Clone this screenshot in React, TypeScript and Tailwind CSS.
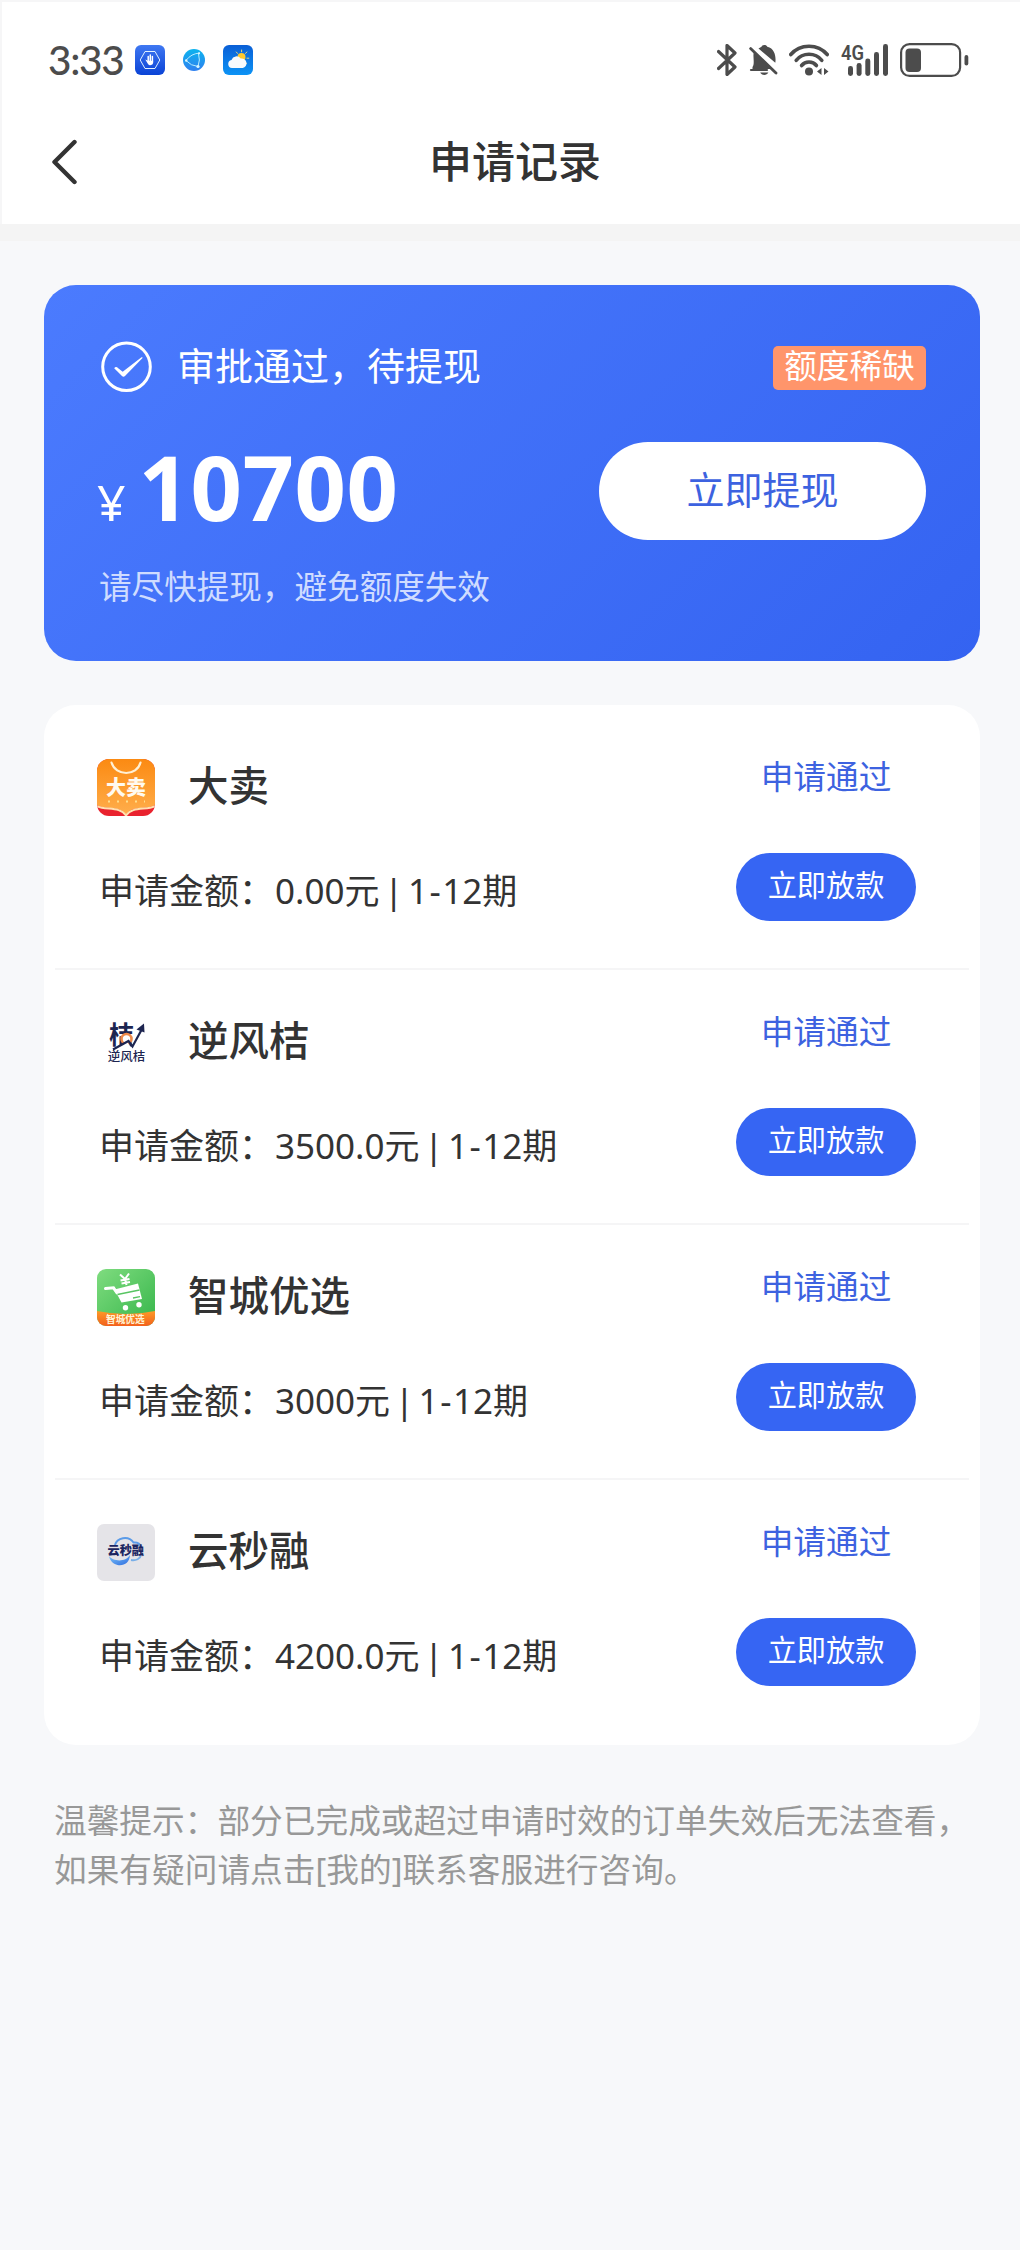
import type { ReactNode } from "react";

type RecordItem = {
  name: string;
  amount: string;
  icon: ReactNode;
};

function LockAppIcon() {
  return (
    <svg viewBox="0 0 30 30" className="h-[30px] w-[30px]">
      <defs>
        <linearGradient id="lock-bg" x1="0" y1="0" x2="0" y2="1">
          <stop offset="0" stopColor="#3f78f2" />
          <stop offset="1" stopColor="#0a43d6" />
        </linearGradient>
      </defs>
      <rect width="30" height="30" rx="6" fill="url(#lock-bg)" />
      <path d="M10 6.500h10l4.800 8.500-4.800 8.500H10L5.200 15z" fill="none" stroke="#dff0ff" strokeWidth="1" strokeLinejoin="round" />
      <path d="M13.200 16v-4.500M15.300 16v-6M17.400 16v-4.500" stroke="#fff" strokeWidth="1.500" strokeLinecap="round" />
      <path d="M10.300 14.500l2.700 1.300h5.200v1.700a2.900 2.900 0 0 1-5.200 1.600z" fill="#fff" />
    </svg>
  );
}

function GlobeAppIcon() {
  return (
    <svg viewBox="0 0 22 22" className="h-[22px] w-[22px]">
      <defs>
        <linearGradient id="globe-bg" x1="0" y1="0" x2="0" y2="1">
          <stop offset="0" stopColor="#0cb4ee" />
          <stop offset="1" stopColor="#2f80f0" />
        </linearGradient>
      </defs>
      <circle cx="11" cy="11" r="11" fill="url(#globe-bg)" />
      <path d="M3 11.500Q8 4.500 17 4M3 11.500Q8 17 15 17.500M15.500 4.500Q17.500 11 15 17.500" fill="none" stroke="#b8ecff" strokeWidth="1" />
      <circle cx="3.200" cy="11.500" r="1.200" fill="#d8f5ff" />
      <circle cx="15" cy="17.500" r="1.600" fill="#d8f5ff" />
      <circle cx="16" cy="4.300" r="1.100" fill="#d8f5ff" />
    </svg>
  );
}

function WeatherAppIcon() {
  return (
    <svg viewBox="0 0 30 30" className="h-[30px] w-[30px]">
      <defs>
        <linearGradient id="weather-bg" x1="0" y1="0" x2="0" y2="1">
          <stop offset="0" stopColor="#0a5fd6" />
          <stop offset="1" stopColor="#0c93f5" />
        </linearGradient>
      </defs>
      <rect width="30" height="30" rx="6" fill="url(#weather-bg)" />
      <path d="M18.600 5v1.800M13.300 7l1.200 1.400M23.800 7l-1.200 1.400M24 13.200h1.800M22.600 17.500l1 1" stroke="#e8d47a" strokeWidth="1" strokeLinecap="round" />
      <circle cx="18.500" cy="12" r="4" fill="#ffc92e" />
      <path d="M9 23a4.100 4.100 0 0 1-.5-8.100 5.200 5.200 0 0 1 9.200-1.300 4.800 4.800 0 1 1 2 9.400z" fill="#f7fafd" />
    </svg>
  );
}

function StatusBar() {
  return (
    <div className="flex h-[115px] items-center justify-between pl-[46px] pr-[51px] text-[#4c4c4c]">
      <div className="flex items-center">
        <span className="w-[87px] font-[Lato,sans-serif] text-[40.500px] font-medium leading-[48px] tracking-[-1.300px]">3:33</span>
        <LockAppIcon />
        <div className="mx-[18px]">
          <GlobeAppIcon />
        </div>
        <WeatherAppIcon />
      </div>
      <div className="flex items-center">
        {/* bluetooth */}
        <svg viewBox="0 0 20 32" className="h-8 w-5" fill="none" stroke="currentColor" strokeWidth="3.200" strokeLinecap="round" strokeLinejoin="round">
          <path d="M1.500 7.500L18 23l-8 7.500v-29L18 9 1.500 24.500" />
        </svg>
        {/* muted bell */}
        <svg viewBox="0 0 30 32" className="ml-3 h-8 w-[30px]">
          <path
            d="M3.500 25h20.800L4.800 8.800C4 11 4.800 14.500 4.700 18c0 2.300-.2 3.700-1.200 5zM9.500 4.500L26.300 18.800C27.200 13 26 4.600 18.300 2.800 17.500.3 13.300.3 12.500 2.800z"
            fill="currentColor"
          />
          <path d="M11.200 28.500h8.200c-1.600 3.200-6.600 3.200-8.200 0z" fill="currentColor" />
          <path d="M1.600 4.600L27 29" stroke="currentColor" strokeWidth="2.800" strokeLinecap="round" />
          <path d="M2 26h16" stroke="currentColor" strokeWidth="2.200" strokeLinecap="round" />
        </svg>
        {/* wifi with traffic arrows */}
        <svg viewBox="0 0 40 32" className="ml-[10px] h-8 w-10" fill="none" stroke="currentColor" strokeWidth="3.600" strokeLinecap="round">
          <path d="M1.800 10.500C11-.6 29-.6 38.200 10.500" />
          <path d="M7.200 16.300c6.600-8 19-8 25.600 0" />
          <path d="M12.600 21.500c3.700-4.600 11.100-4.600 14.800 0" />
          <circle cx="20" cy="27.500" r="4" fill="currentColor" stroke="none" />
          <path d="M32.500 24v7l-4.500-3.500zM35 24v7l4.500-3.500z" fill="currentColor" stroke="none" />
        </svg>
        {/* 4G signal */}
        <svg viewBox="0 -6 48 44" className="ml-3 h-11 w-12 overflow-visible" fill="currentColor">
          <text x="0" y="16" fontFamily="Roboto, sans-serif" fontSize="21" fontWeight="600" textLength="23" lengthAdjust="spacingAndGlyphs">4G</text>
          <rect x="7" y="22" width="5" height="10" rx="2.400" />
          <rect x="15.600" y="19" width="5" height="13" rx="2.400" />
          <rect x="24.300" y="14.500" width="5" height="17.500" rx="2.400" />
          <rect x="33" y="8" width="5" height="24" rx="2.400" />
          <rect x="42" y="0" width="5" height="32" rx="2.400" />
        </svg>
        {/* battery */}
        <svg viewBox="0 0 69 34" className="ml-[11px] h-[34px] w-[69px]">
          <rect x="1.100" y="1.100" width="59" height="31.800" rx="8.500" fill="none" stroke="currentColor" strokeWidth="2.200" />
          <rect x="5.500" y="5.500" width="15.500" height="23.500" rx="4" fill="currentColor" />
          <rect x="64.500" y="12" width="3.800" height="10.500" rx="1.900" fill="currentColor" />
        </svg>
      </div>
    </div>
  );
}

function DamaiIcon() {
  return (
    <svg viewBox="0 0 58 57" className="h-[57px] w-[58px]">
      <defs>
        <linearGradient id="damai-bg" x1="0" y1="0" x2="0" y2="1">
          <stop offset="0" stopColor="#fb8a12" />
          <stop offset="1" stopColor="#ffae4c" />
        </linearGradient>
        <clipPath id="damai-clip">
          <rect width="58" height="57" rx="12" />
        </clipPath>
      </defs>
      <g clipPath="url(#damai-clip)">
        <rect width="58" height="57" fill="#e9222e" />
        <path d="M0 0h58v46c-9 5-24 0-29 10C24 46 8 51 0 46z" fill="url(#damai-bg)" />
        <path d="M0 47c8 4.500 23 0 29 9.500 6-9.500 21-5 29-9.500" fill="none" stroke="#ffe0ae" strokeWidth="2" />
        <path d="M14.500 3.500c4 14 25.500 14 29 0" fill="none" stroke="#fff0d4" strokeWidth="2.200" strokeLinecap="round" />
        <text x="9" y="36" fontFamily="Noto Sans CJK SC, sans-serif" fontSize="20" fontWeight="800" fill="#fffaf0">大卖</text>
        <path d="M11 42.500h37" stroke="#ffdf8c" strokeWidth="1.800" strokeDasharray="2 7" />
      </g>
    </svg>
  );
}

function NifengjieIcon() {
  return (
    <svg viewBox="0 0 58 57" className="h-[57px] w-[58px] overflow-visible">
      <text x="12" y="30" fontFamily="Noto Sans CJK SC, sans-serif" fontSize="25" fontWeight="700" fill="#1d2550">桔</text>
      <circle cx="29.500" cy="25" r="5" fill="#fff" stroke="#ef8a4a" strokeWidth="2.600" />
      <path d="M16 36.500L30 28l5 6.500 10-17.500v19.500z" fill="#fff" />
      <path d="M16 35.500L31.500 27l4 5.500L45 15" fill="none" stroke="#1d2550" strokeWidth="2.200" />
      <path d="M39.500 15.500l7.500-6 .5 9z" fill="#1d2550" />
      <text x="10.800" y="46.500" fontFamily="Noto Sans CJK SC, sans-serif" fontSize="12.500" fontWeight="500" fill="#1d2550">逆风桔</text>
    </svg>
  );
}

function ZhichengIcon() {
  return (
    <svg viewBox="0 0 58 57" className="h-[57px] w-[58px]">
      <defs>
        <linearGradient id="zhicheng-bg" x1="0" y1="0" x2="1" y2="1">
          <stop offset="0" stopColor="#7fdc7f" />
          <stop offset="1" stopColor="#35b54a" />
        </linearGradient>
        <linearGradient id="zhicheng-bar" x1="0" y1="0" x2="0" y2="1">
          <stop offset="0" stopColor="#fb9a28" />
          <stop offset="1" stopColor="#f4601c" />
        </linearGradient>
        <clipPath id="zhicheng-clip">
          <rect width="58" height="57" rx="9" />
        </clipPath>
      </defs>
      <g clipPath="url(#zhicheng-clip)">
        <rect width="58" height="57" fill="url(#zhicheng-bg)" />
        <path d="M0 42q29 6 58 0v15H0z" fill="url(#zhicheng-bar)" />
        <path d="M8.500 19.500l8-.7 3.500 5" fill="none" stroke="#fff" strokeWidth="3" strokeLinecap="round" />
        <path d="M17.500 20.500L41 14.500l4 15.500-20.500 3.500z" fill="#fff" />
        <path d="M20.500 25.500l22-4.500M36 29l7-1.300" stroke="#57c562" strokeWidth="1.300" />
        <circle cx="28.500" cy="38.800" r="2.700" fill="#fff" />
        <circle cx="42" cy="35.800" r="2.700" fill="#fff" />
        <path d="M23 5.500l5 4.500 4-5.500M28 10l1.500 6M23.500 11.500l9-1.500M24.500 14.500l8.500-1.500" fill="none" stroke="#fff" strokeWidth="2" />
        <text x="9" y="54" fontFamily="Noto Sans CJK SC, sans-serif" fontSize="9.700" fontWeight="700" fill="#fff3d6">智城优选</text>
      </g>
    </svg>
  );
}

function YunmiaorongIcon() {
  return (
    <svg viewBox="0 0 58 57" className="h-[57px] w-[58px]">
      <defs>
        <linearGradient id="yun-swoosh" x1="0" y1="0" x2="1" y2="1">
          <stop offset="0" stopColor="#7cc4f8" />
          <stop offset="1" stopColor="#2f6de0" />
        </linearGradient>
      </defs>
      <rect width="58" height="57" rx="7" fill="#e5e4e8" />
      <path d="M18 21c2-7 13-10 18.500-2.500 4.500-.5 7 2 7.500 4.500" fill="none" stroke="#5b9be8" strokeWidth="2" />
      <path d="M12 32c3.500 5 16 7 21-1-.5 8-6 11-12.500 10-3.500-.8-7.500-3.500-8.500-9z" fill="url(#yun-swoosh)" />
      <path d="M34 36c5 1 9.500-1.500 10-5" fill="none" stroke="#78aee8" strokeWidth="1.800" />
      <text x="10.500" y="30.500" fontFamily="Noto Sans CJK SC, sans-serif" fontSize="12.200" fontWeight="800" fill="#1b2560">云秒融</text>
    </svg>
  );
}

const records: RecordItem[] = [
  { name: "大卖", amount: "0.00元", icon: <DamaiIcon /> },
  { name: "逆风桔", amount: "3500.0元", icon: <NifengjieIcon /> },
  { name: "智城优选", amount: "3000元", icon: <ZhichengIcon /> },
  { name: "云秒融", amount: "4200.0元", icon: <YunmiaorongIcon /> },
];

function RecordRow({ record }: { record: RecordItem }) {
  return (
    <li className="flex h-[255px] justify-between border-b-2 border-[#f5f5f6] pl-[42px] pr-[53px] pt-[44px] last:border-transparent">
      <div>
        <div className="flex h-[57px] items-start">
          {record.icon}
          <h2 className="ml-[33px] text-[40.500px] font-medium leading-[54px]">{record.name}</h2>
        </div>
        <p className="ml-[2px] mt-[49px] whitespace-pre text-[35px] leading-[52px] [word-spacing:-4.500px]">
          申请金额：<span className="ml-[1px]">{record.amount}</span> | 1<span className="px-[1.500px]">-</span>12期
        </p>
      </div>
      <div className="flex w-[180px] flex-col items-center">
        <span className="text-[32.700px] leading-[36px] text-[#3d62e0]">申请通过</span>
        <button
          type="button"
          className="mt-[58px] h-[68px] w-full rounded-full bg-[#3665f3] pb-1 text-[29.200px] leading-[64px] text-white"
        >
          立即放款
        </button>
      </div>
    </li>
  );
}

export default function App() {
  return (
    <div className="min-h-[2250px] w-[1020px] bg-[#f7f8fa] font-['Noto_Sans','Noto_Sans_CJK_SC',sans-serif] text-[#333333]">
      <header className="h-[241px] border-b-[17px] border-[#f4f4f4] bg-white">
        <div className="h-[224px] border-l-2 border-t-2 border-[#f6f6f7]">
          <StatusBar />
          <div className="grid h-[90px] grid-cols-[120px_1fr_112px] items-center">
            <button type="button" aria-label="返回" className="pl-[48px]">
              <svg viewBox="0 0 28 46" className="h-[46px] w-7" fill="none" stroke="#333" strokeWidth="4.400" strokeLinecap="round" strokeLinejoin="round">
                <path d="M24.500 3L4.500 23l20 20" />
              </svg>
            </button>
            <h1 className="pb-[1px] text-center text-[43px] font-medium leading-[60px]">申请记录</h1>
          </div>
        </div>
      </header>

      <main className="pl-[44px] pr-[40px] pt-[44px]">
        <section className="h-[376px] rounded-[32px] bg-[linear-gradient(135deg,#4b7bfe_0%,#3463f1_100%)] pl-[55px] pr-[54px] pt-[54px] text-white">
          <div className="flex h-14 items-center justify-between">
            <div className="flex items-center">
              <svg viewBox="0 0 56 56" className="h-14 w-14">
                <circle cx="27.500" cy="27.800" r="23.800" fill="none" stroke="#fff" strokeWidth="3" />
                <path d="M15.200 29.300c1-1.800 2.600-1.800 4 0l4.500 3.500L42.500 18.300c.8-.5 1.400.3.800 1L26 37.100c-1 1-2.200.9-3 0z" fill="#fff" />
              </svg>
              <span className="ml-[22px] pb-1 text-[38px] leading-[52px]">审批通过，待提现</span>
            </div>
            <span className="mt-[2px] h-11 w-[153px] rounded-[5px] bg-[#ff956b] text-center text-[32.700px] leading-[40px]">额度稀缺</span>
          </div>
          <div className="mt-[47px] flex h-[98px] items-center justify-between">
            <div className="flex items-baseline pt-[5px]">
              <span className="-ml-[2px] text-[50px] leading-[90px]">¥</span>
              <span className="ml-[13px] text-[90px] font-bold leading-[90px] tracking-[0.500px]">10700</span>
            </div>
            <button type="button" className="h-[98px] w-[327px] rounded-full bg-white pb-1 text-[38px] leading-[93px] text-[#3d62e0]">
              立即提现
            </button>
          </div>
          <p className="mt-[23px] text-[32.600px] leading-[48px] text-[#cfdcff]">请尽快提现，避免额度失效</p>
        </section>

        <ul className="mt-[44px] rounded-[32px] bg-white py-[10px] pl-[11px] pr-[11px]">
          {records.map((record) => (
            <RecordRow key={record.name} record={record} />
          ))}
        </ul>

        <p className="ml-[10px] mt-[51px] text-[32.700px] leading-[49px] text-[#989898]">
          温馨提示：部分已完成或超过申请时效的订单失效后无法查看，
          <br />
          如果有疑问请点击[我的]联系客服进行咨询。
        </p>
      </main>
    </div>
  );
}
